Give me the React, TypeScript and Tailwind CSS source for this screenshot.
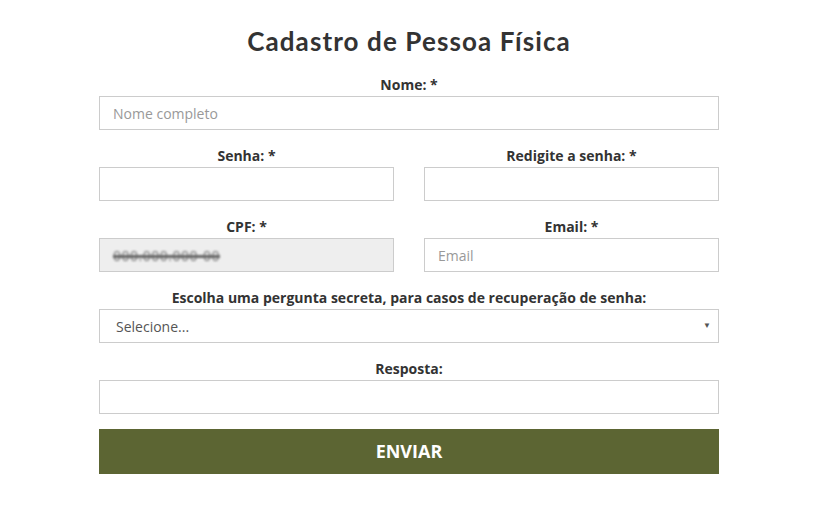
import React from 'react';

const inputClass =
  'w-full h-[34px] px-[13px] border border-[#cccccc] bg-white text-[14px] text-[#555] placeholder-[#999] focus:outline-none';

const Field = ({ label, children }: { label: string; children: React.ReactNode }) => (
  <label className="block">
    <span className="block text-center text-[14px] leading-[21px] font-bold text-[#333] -translate-y-[1px]">{label}</span>
    {children}
  </label>
);

const App = () => {
  return (
    <div className="min-h-screen bg-white font-['Open_Sans',sans-serif]">
      <form className="w-[620px] ml-[99px] pt-[25px]" onSubmit={(e) => e.preventDefault()}>
        <h1 className="text-center text-[26px] leading-[32px] font-bold text-[#333] font-['Lato',sans-serif] tracking-[1.1px]">
          Cadastro de Pessoa Física
        </h1>

        <div className="mt-[18px] flex flex-col gap-[16px]">
          {/* Nome */}
          <Field label="Nome: *">
            <input type="text" className={inputClass} placeholder="Nome completo" />
          </Field>

          {/* Senhas */}
          <div className="grid grid-cols-2 gap-[30px]">
            <Field label="Senha: *">
              <input type="password" className={inputClass} />
            </Field>
            <Field label="Redigite a senha: *">
              <input type="password" className={inputClass} />
            </Field>
          </div>

          {/* CPF / Email */}
          <div className="grid grid-cols-2 gap-[30px]">
            <Field label="CPF: *">
              <div className="w-full h-[34px] px-[13px] border border-[#cccccc] bg-[#eeeeee] flex items-center">
                <span className="text-[14px] text-[#777] line-through decoration-[#666] decoration-[3px] blur-[1px] tracking-[0.5px]">
                  000.000.000-00
                </span>
              </div>
            </Field>
            <Field label="Email: *">
              <input type="email" className={inputClass} placeholder="Email" />
            </Field>
          </div>

          {/* Pergunta secreta */}
          <Field label="Escolha uma pergunta secreta, para casos de recuperação de senha:">
            <div className="relative">
              <select className="w-full h-[34px] pl-[16px] pr-8 border border-[#cccccc] bg-white text-[14px] text-[#555] appearance-none focus:outline-none">
                <option>Selecione...</option>
              </select>
              <span className="absolute right-[8px] top-[10px] text-[8px] text-[#555] pointer-events-none">▼</span>
            </div>
          </Field>

          {/* Resposta */}
          <Field label="Resposta:">
            <input type="text" className={inputClass} />
          </Field>
        </div>

        <button
          type="submit"
          className="mt-[15px] w-full h-[45px] bg-[#5c6533] text-white text-[18px] font-bold"
        >
          ENVIAR
        </button>
      </form>
    </div>
  );
};

export default App;
